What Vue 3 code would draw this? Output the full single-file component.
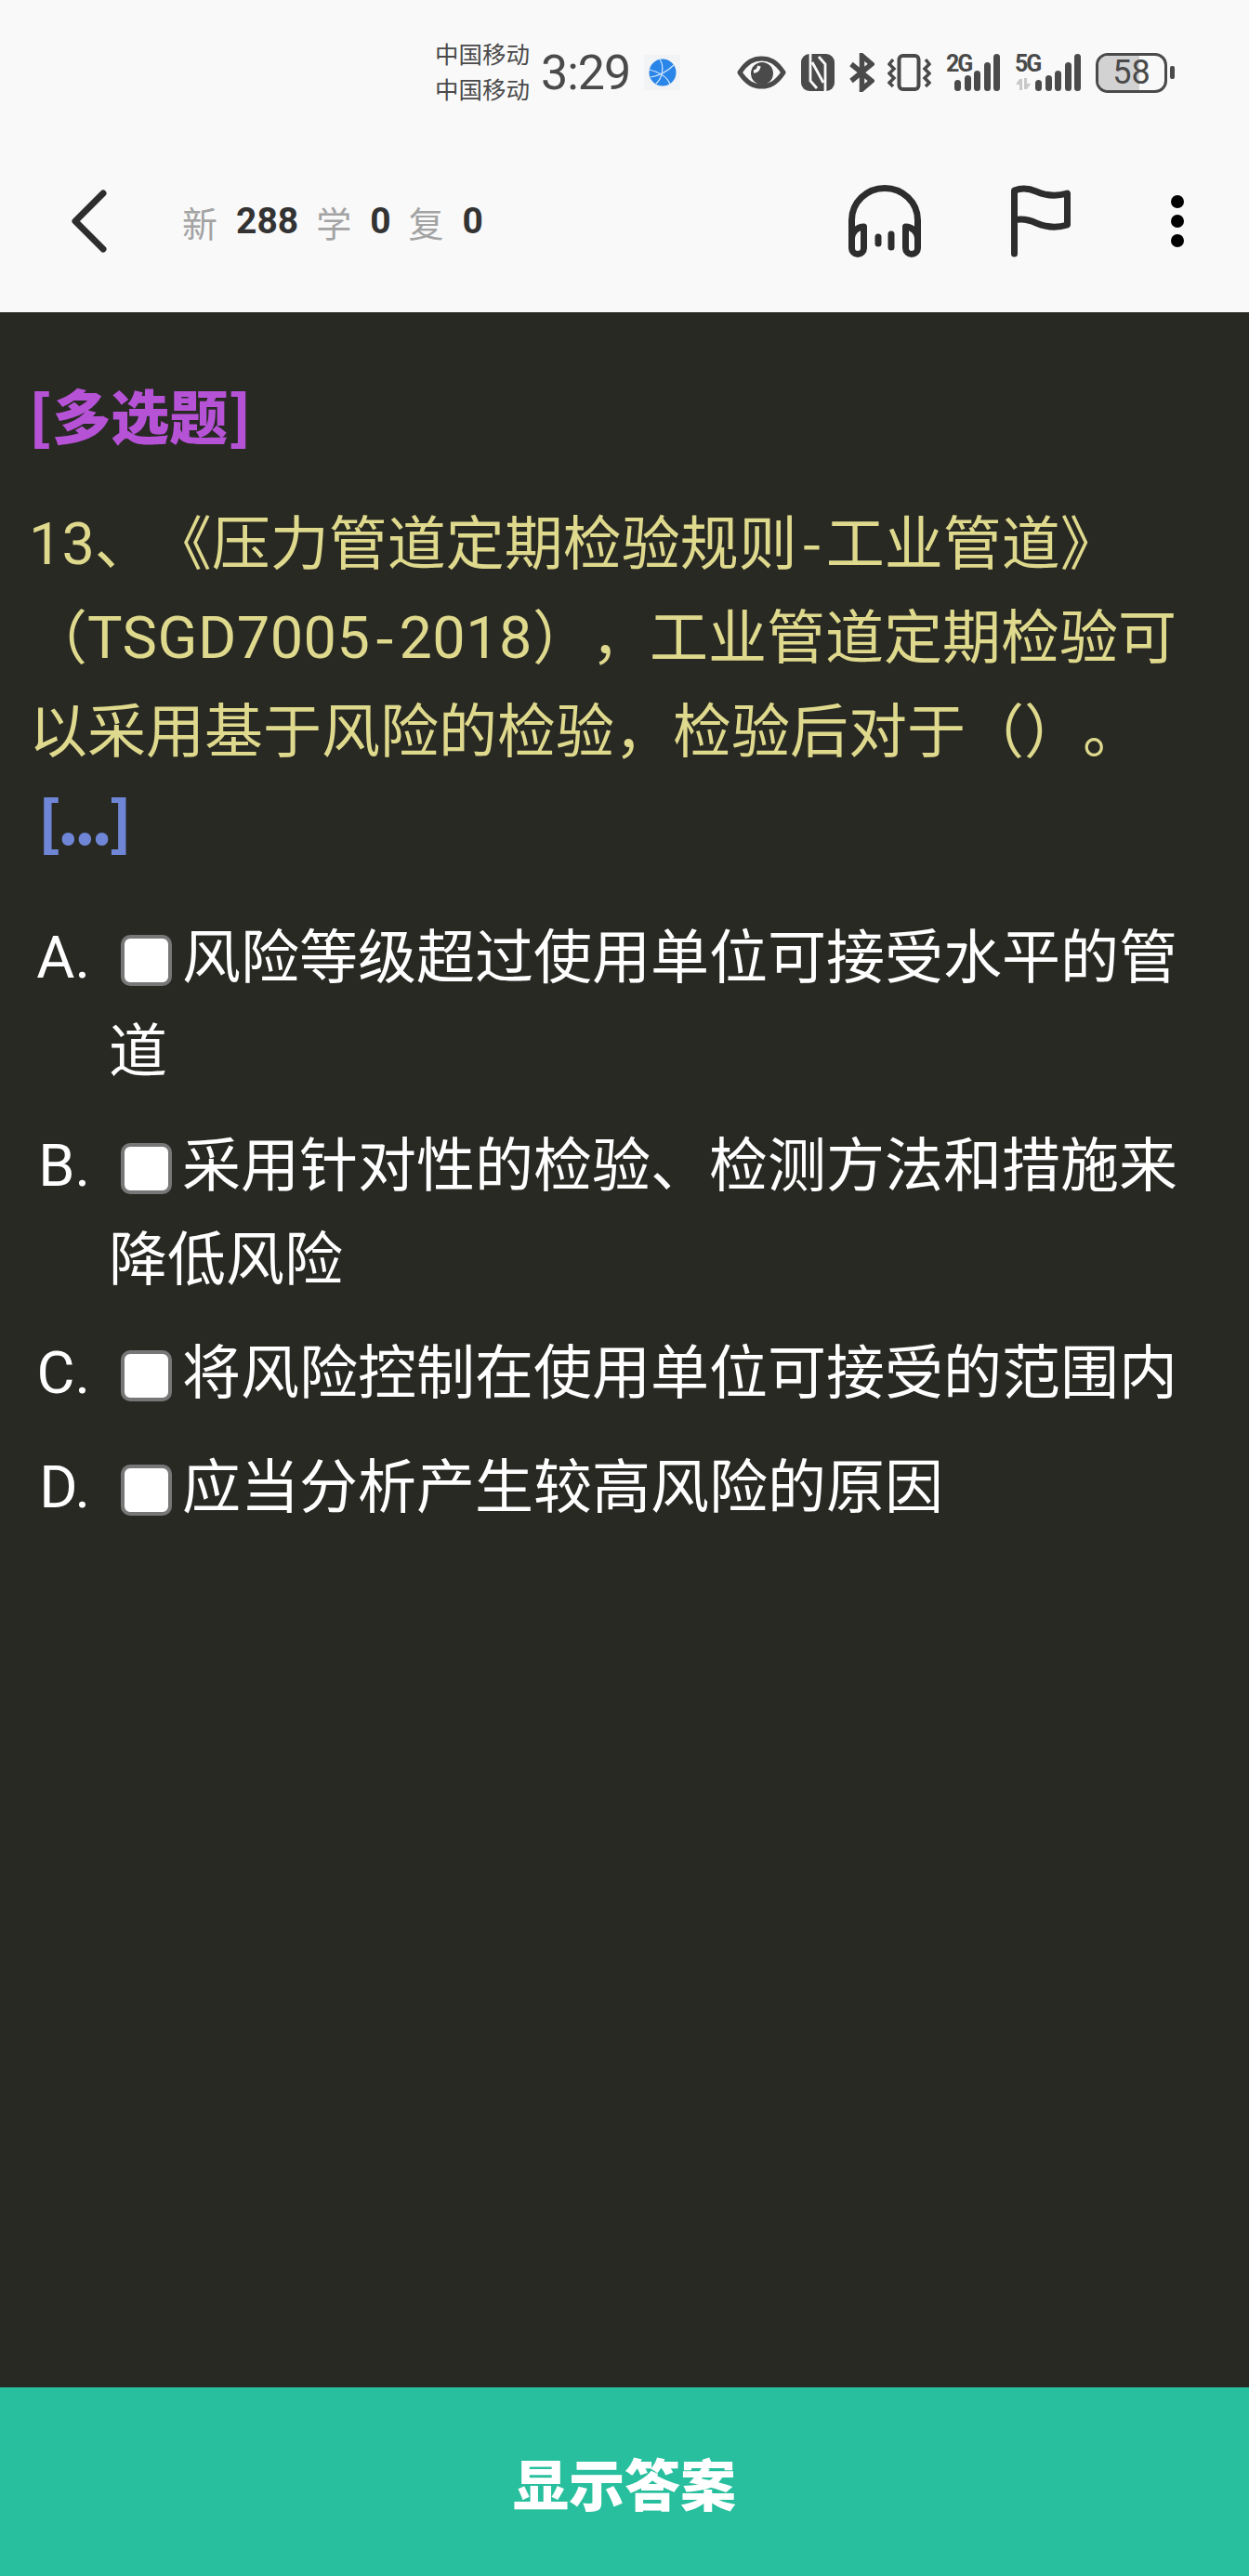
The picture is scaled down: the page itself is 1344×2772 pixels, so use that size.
<script setup>
const options = [
  { label: 'A.', text: '风险等级超过使用单位可接受水平的管道' },
  { label: 'B.', text: '采用针对性的检验、检测方法和措施来降低风险' },
  { label: 'C.', text: '将风险控制在使用单位可接受的范围内' },
  { label: 'D.', text: '应当分析产生较高风险的原因' },
]
</script>

<template>
  <div class="page">
    <header class="top">
      <div class="status">
        <div class="carriers"><span>中国移动</span><span>中国移动</span></div>
        <span class="time">3:29</span>
        <span class="globe-wrap">
          <svg class="globe" viewBox="0 0 30 30"><circle cx="15" cy="15" r="14.500" fill="#2a85e8"/><path d="M1 12C9 14 20 19 23 28M12 1C17 8 15 21 8 27M27 7C21 13 14 18 2 20" fill="none" stroke="#cfe6ff" stroke-width="1.200"/></svg>
        </span>
        <svg class="eye" viewBox="0 0 53 36"><path d="M3 18C11 6 18 3 26.500 3S42 6 50 18C42 30 35 33 26.500 33S11 30 3 18Z" fill="none" stroke="#4a4a4a" stroke-width="5" stroke-linejoin="round"/><circle cx="27" cy="19" r="12" fill="#4a4a4a"/><path d="M18 17c3 0 5-2 6-6" fill="none" stroke="#f9f9f9" stroke-width="3.500"/></svg>
        <svg class="nfc" viewBox="0 0 36 40"><rect width="36" height="40" rx="9" fill="#4a4a4a"/><path d="M10 0V29L17 37M26 40V11L19 3M12 9L24 31" fill="none" stroke="#f9f9f9" stroke-width="2.800"/></svg>
        <svg class="bt" viewBox="0 0 28 42"><path d="M3 12L25 30L14.500 39V3L25 12L3 30" fill="none" stroke="#4a4a4a" stroke-width="5.500"/></svg>
        <svg class="vib" viewBox="0 0 47 40"><rect x="12.500" y="2" width="21" height="36" rx="4" fill="none" stroke="#4a4a4a" stroke-width="4"/><path d="M6 6L2 11L7 16L2 21L7 26L2 31L6 35M41 6L45 11L40 16L45 21L40 26L45 31L41 35" fill="none" stroke="#4a4a4a" stroke-width="3.500"/></svg>
        <div class="signal">
          <span class="net">2G</span>
          <svg class="bars" viewBox="0 0 49 40"><rect x="0" y="28" width="7" height="12" rx="3.500"/><rect x="11" y="23" width="7" height="17" rx="3.500"/><rect x="21" y="18" width="7" height="22" rx="3.500"/><rect x="32" y="9" width="7" height="31" rx="3.500"/><rect x="42" y="0" width="7" height="40" rx="3.500"/></svg>
        </div>
        <div class="signal five">
          <span class="net">5G</span>
          <svg class="arrows" viewBox="0 0 16 13"><path d="M0 7L4 1H7V13H4V7ZM9 0H12V6H16L12 12H9Z" fill="#c9c9c9"/></svg>
          <svg class="bars" viewBox="0 0 49 40"><rect x="0" y="28" width="7" height="12" rx="3.500"/><rect x="11" y="23" width="7" height="17" rx="3.500"/><rect x="21" y="18" width="7" height="22" rx="3.500"/><rect x="32" y="9" width="7" height="31" rx="3.500"/><rect x="42" y="0" width="7" height="40" rx="3.500"/></svg>
        </div>
        <div class="battery"><span class="bat-body"><i class="bat-fill"></i><b>58</b></span><i class="bat-cap"></i></div>
      </div>

      <div class="toolbar">
        <svg class="back" viewBox="0 0 38 68"><path d="M34 4L4 34l30 30" fill="none" stroke="#2d2d2d" stroke-width="7" stroke-linecap="round" stroke-linejoin="round"/></svg>
        <div class="counts">
          <span class="k">新</span><b>288</b>
          <span class="k">学</span><b>0</b>
          <span class="k">复</span><b>0</b>
        </div>
        <svg class="phones" viewBox="0 0 78 78"><path d="M3.500 66V38a35.500 34.500 0 0 1 71 0v28" fill="none" stroke="#2d2d2d" stroke-width="7"/><path d="M3.500 58c0-7 6-13 13-13v23a6.500 6.500 0 0 1-13 0ZM74.500 58c0-7-6-13-13-13v23a6.500 6.500 0 0 0 13 0Z" fill="none" stroke="#2d2d2d" stroke-width="7" stroke-linejoin="round"/><path d="M32 56v7M46 53v14" stroke="#2d2d2d" stroke-width="7" stroke-linecap="round"/></svg>
        <svg class="flag" viewBox="0 0 64 78"><path d="M3.500 74V6C11 3 18 3 27 7c9 4 20 6 33.500 2v34c-13 4-24 2-33.500-2C18 37 11 36 3.500 38" fill="none" stroke="#2d2d2d" stroke-width="7" stroke-linecap="round" stroke-linejoin="round"/></svg>
        <svg class="more" viewBox="0 0 14 56"><circle cx="7" cy="7" r="7"/><circle cx="7" cy="28" r="7"/><circle cx="7" cy="49" r="7"/></svg>
      </div>
    </header>

    <main class="body">
      <div class="type">[多选题]</div>
      <p class="question">
        <span class="line">13、《压力管道定期检验规则<span class="dash">-</span>工业管道》</span>
        <span class="line">（<span class="latin">TSGD7005</span><span class="dash">-</span><span class="latin">2018</span>），工业管道定期检验可</span>
        <span class="line">以采用基于风险的检验，检验后对于（）。</span>
      </p>
      <div class="blank">[...]</div>
      <ul class="options">
        <li v-for="o in options" :key="o.label" class="option">
          <span class="label">{{ o.label }}</span>
          <div class="option-text"><i class="box"></i>{{ o.text }}</div>
        </li>
      </ul>
    </main>

    <footer class="answer">显示答案</footer>
  </div>
</template>

<style scoped>
.page {
  height: 2772px;
  display: flex;
  flex-direction: column;
  background: #282923;
  font-family: Roboto, "Noto Sans CJK SC", sans-serif;
  overflow: hidden;
}
.top { background: #f9f9f9; height: 336px; flex: none; }
.status {
  height: 156px;
  display: flex;
  align-items: center;
  padding-left: 468px;
  color: #4a4a4a;
  box-sizing: border-box;
}
.carriers { display: flex; flex-direction: column; font-size: 25.500px; line-height: 38px; width: 114px; flex: none; }
.time { font-size: 52px; font-weight: 400; width: 111px; flex: none; color: #4a4a4a; letter-spacing: -1px; }
.globe-wrap { width: 39px; height: 38px; background: #f1f3f5; display: flex; align-items: center; justify-content: center; margin-right: 61px; flex: none; }
.globe { width: 30px; height: 30px; }
.eye { width: 53px; height: 36px; margin-right: 16px; flex: none; }
.nfc { width: 36px; height: 40px; margin-right: 15px; flex: none; }
.bt { width: 28px; height: 42px; margin-right: 14px; flex: none; }
.vib { width: 47px; height: 40px; margin-right: 16px; flex: none; }
.signal { position: relative; width: 58px; height: 40px; margin-right: 16px; flex: none; }
.five { width: 71px; }
.net { position: absolute; left: 0; top: -4px; font-size: 25px; line-height: 30px; font-weight: 700; letter-spacing: -2px; color: #4a4a4a; }
.arrows { position: absolute; left: 1px; bottom: 1px; width: 16px; height: 13px; }
.bars { position: absolute; right: 0; bottom: 0; width: 49px; height: 40px; fill: #4a4a4a; }
.battery { display: flex; align-items: center; gap: 3px; flex: none; }
.bat-body { position: relative; width: 77px; height: 43px; border: 3.500px solid #4a4a4a; border-radius: 13px; box-sizing: border-box; display: flex; align-items: center; justify-content: center; overflow: hidden; }
.bat-fill { position: absolute; left: 0; top: 0; bottom: 0; width: 62%; background: #d2d2d2; }
.bat-body b { position: relative; font-weight: 400; font-size: 36px; color: #4a4a4a; }
.bat-cap { width: 5px; height: 14px; background: #4a4a4a; border-radius: 2px; }

.toolbar { display: flex; align-items: center; height: 164px; padding-left: 77px; }
.back { width: 38px; height: 68px; margin-right: 81px; flex: none; }
.counts { display: flex; align-items: center; font-size: 38px; flex: 1; }
.k { color: #a3a3a3; margin-right: 20px; }
.counts b { color: #333; font-weight: 700; margin-right: 19px; font-size: 39px; }
.phones { width: 78px; height: 78px; margin-right: 97px; flex: none; }
.flag { width: 64px; height: 78px; margin-right: 108px; flex: none; }
.more { width: 14px; height: 56px; margin-right: 70px; flex: none; }

.body { flex: 1; padding: 0 31px; min-height: 0; }
.type { color: #b552d6; font-family: "Noto Sans CJK SC", sans-serif; font-weight: 900; font-size: 63px; line-height: 101px; margin-top: 58px; }
.question { margin: 40px 0 0; color: #dfd98d; font-size: 63px; line-height: 101px; text-spacing-trim: space-all; }
.line { display: block; white-space: nowrap; }
.dash { display: inline-block; width: 31px; line-height: 1; text-align: center; font-family: "Noto Sans CJK SC", sans-serif; }
.latin { letter-spacing: 0.500px; }
.blank { color: #6f86d6; font-family: "Noto Sans CJK SC", sans-serif; font-weight: 900; font-size: 63px; line-height: 101px; padding-left: 10px; letter-spacing: -4px; margin-top: -7px; }
.options { list-style: none; margin: 48px 0 0; padding: 0; }
.option { display: flex; color: #fff; font-size: 63px; line-height: 101px; margin-bottom: 21.500px; }
.label { flex: none; width: 66px; text-align: right; margin-right: 20px; }
.option-text { flex: 1; min-width: 0; }
.box { display: inline-block; width: 55px; height: 55px; box-sizing: border-box; background: #fff; border: 4px solid #777; border-radius: 10px; margin: 0 11px 0 13px; vertical-align: -9px; }

.answer { flex: none; height: 203px; background: #27bf9d; color: #fff; font-weight: 900; font-size: 60px; display: flex; align-items: center; justify-content: center; }
</style>
